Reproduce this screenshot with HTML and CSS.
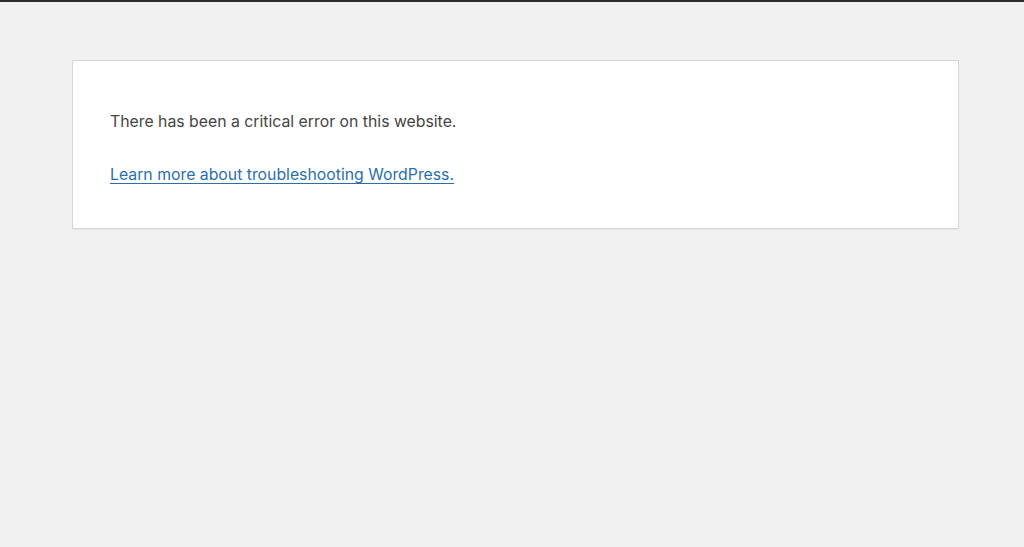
FILE: index.html
```html
<!DOCTYPE html>
<html lang="en">
<head>
<meta charset="utf-8">
<title>WordPress › Error</title>
<link rel="stylesheet" href="styles.css">
</head>
<body>
<div class="topbar"></div>
<main class="page">
  <div class="error-box">
    <p class="msg">There has been a critical error on this website.</p>
    <p class="msg"><a class="link" href="#">Learn more about troubleshooting WordPress.</a></p>
  </div>
</main>
</body>
</html>
```

FILE: styles.css
```css
html, body {
  margin: 0;
  padding: 0;
  background: #f1f1f1;
  height: 100%;
}
body {
  font-family: Inter, "Noto Sans", "Liberation Sans", sans-serif;
  color: #444;
}
.topbar {
  height: 2px;
  background: #2c2c2c;
}
.page {
  padding-top: 58px;
  padding-left: 72px;
}
.error-box {
  box-sizing: border-box;
  width: 887px;
  height: 169px;
  background: #fff;
  border: 1px solid #d4d6d8;
  box-shadow: 0 1px 1px rgba(0,0,0,0.04);
  padding: 49px 37px 0;
}
.msg {
  margin: 0 0 29px;
  font-size: 15.8px;
  line-height: 24px;
}
.link {
  color: #2a6fad;
  text-decoration: underline;
  text-underline-offset: 3px;
}
```
